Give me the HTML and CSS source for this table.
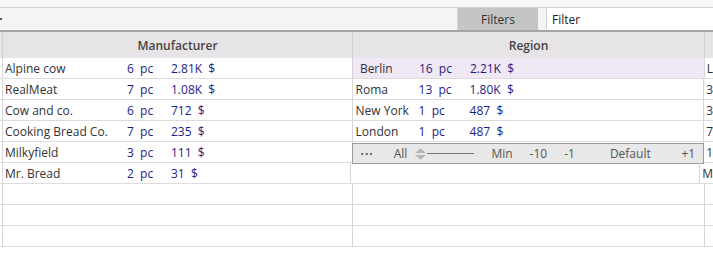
FILE: index.html
```html
<!DOCTYPE html>
<html>
<head>
<meta charset="utf-8">
<link rel="stylesheet" href="styles.css">
</head>
<body>
<div class="top-strip"></div>
<div class="toolbar">
  <span class="dot"></span>
  <div class="spacer"></div>
  <button class="filters-btn">Filters</button>
  <div class="filter-input">Filter</div>
</div>
<div class="grid">
  <div class="header">
    <div class="gutter"></div>
    <div class="hcell c1">Manufacturer</div>
    <div class="hcell c2">Region</div>
    <div class="hcell c3"></div>
  </div>
  <div class="row">
    <div class="gutter"></div>
    <div class="cell c1"><span class="name">Alpine cow</span><span class="qty">6&nbsp; pc</span><span class="sum">2.81K&nbsp; $</span></div>
    <div class="cell c2 hl"><span class="rname ind">Berlin</span><span class="rqty">16&nbsp; pc</span><span class="rsum">2.21K&nbsp; $</span></div>
    <div class="cell c3">L</div>
  </div>
  <div class="row">
    <div class="gutter"></div>
    <div class="cell c1"><span class="name">RealMeat</span><span class="qty">7&nbsp; pc</span><span class="sum">1.08K&nbsp; $</span></div>
    <div class="cell c2"><span class="rname">Roma</span><span class="rqty">13&nbsp; pc</span><span class="rsum">1.80K&nbsp; $</span></div>
    <div class="cell c3">3</div>
  </div>
  <div class="row">
    <div class="gutter"></div>
    <div class="cell c1"><span class="name">Cow and co.</span><span class="qty">6&nbsp; pc</span><span class="sum">712&nbsp; $</span></div>
    <div class="cell c2"><span class="rname">New York</span><span class="rqty">1&nbsp; pc</span><span class="rsum">487&nbsp; $</span></div>
    <div class="cell c3">3</div>
  </div>
  <div class="row">
    <div class="gutter"></div>
    <div class="cell c1"><span class="name">Cooking Bread Co.</span><span class="qty">7&nbsp; pc</span><span class="sum">235&nbsp; $</span></div>
    <div class="cell c2"><span class="rname">London</span><span class="rqty">1&nbsp; pc</span><span class="rsum">487&nbsp; $</span></div>
    <div class="cell c3">7</div>
  </div>
  <div class="row">
    <div class="gutter"></div>
    <div class="cell c1"><span class="name">Milkyfield</span><span class="qty">3&nbsp; pc</span><span class="sum">111&nbsp; $</span></div>
    <div class="cell c2 pager-cell">
      <div class="pager">
        <span class="p-dots">•••</span>
        <span class="p-all">All</span>
        <svg class="p-spin" width="13" height="12" viewBox="0 0 13 12"><path d="M1 5 L6.5 0.5 L12 5 Z M1 7 L6.5 11.5 L12 7 Z" fill="#b4b4b4"/></svg>
        <span class="p-line"></span>
        <span class="p-min">Min</span>
        <span class="p-m10">-10</span>
        <span class="p-m1">-1</span>
        <span class="p-def">Default</span>
        <span class="p-p1">+1</span>
      </div>
    </div>
    <div class="cell c3">1</div>
  </div>
  <div class="row">
    <div class="gutter"></div>
    <div class="cell c1"><span class="name">Mr. Bread</span><span class="qty">2&nbsp; pc</span><span class="sum">31&nbsp; $</span></div>
    <div class="cell c2"></div>
    <div class="cell c3">M</div>
  </div>
  <div class="row">
    <div class="gutter"></div>
    <div class="cell c1"></div>
    <div class="cell c2"></div>
    <div class="cell c3"></div>
  </div>
  <div class="row">
    <div class="gutter"></div>
    <div class="cell c1"></div>
    <div class="cell c2"></div>
    <div class="cell c3"></div>
  </div>
  <div class="row">
    <div class="gutter"></div>
    <div class="cell c1"></div>
    <div class="cell c2"></div>
    <div class="cell c3"></div>
  </div>
</div>
</body>
</html>
```
FILE: styles.css
```css
* { box-sizing: border-box; }
html, body { margin: 0; padding: 0; background: #fff; }
body {
  width: 713px;
  height: 258px;
  overflow: hidden;
  font-family: "Open Sans", "Noto Sans", sans-serif;
  font-size: 12px;
  color: #333;
}
.top-strip {
  height: 8px;
  background: #f8f8f8;
  border-bottom: 1px solid #d4d4d4;
}
.toolbar {
  display: flex;
  align-items: stretch;
  height: 24px;
  background: #f4f4f4;
  border-bottom: 2px solid #a6a6a6;
}
.dot {
  width: 2px; height: 2px;
  background: #555;
  margin-top: 10px;
}
.spacer { flex: 1; }
.filters-btn {
  width: 81px;
  margin: 0;
  padding: 0;
  border: none;
  border-left: 1px solid #d8d8d8;
  background: #c5c5c5;
  font-family: inherit;
  font-size: 12px;
  color: #333;
}
.filter-input {
  width: 167px;
  margin-left: 8px;
  background: #fff;
  border-left: 1px solid #d0d0d0;
  padding: 3px 0 0 5px;
  color: #222;
}
.header, .row { display: flex; }
.header { height: 26px; background: #e6e4e6; }
.row { height: 21px; }
.gutter { width: 3px; border-right: 1px solid #d6d6d6; }
.header .gutter { border-right-color: #d0d0d0; }
.c1 { width: 350px; }
.c2 { width: 352px; }
.c3 { flex: 1; }
.hcell {
  border-right: 1px solid #d0d0d0;
  text-align: center;
  font-weight: 600;
  color: #444;
  padding-top: 5px;
}
.hcell.c3 { border-right: none; }
.cell {
  border-right: 1px solid #d6d6d6;
  border-bottom: 1px solid #dcdcdc;
  display: flex;
  align-items: center;
  white-space: nowrap;
}
.cell.c3 { border-right: none; padding-left: 2px; color: #333; }
.row .gutter { border-bottom: 1px solid #dcdcdc; }
.name { width: 124px; padding-left: 2px; }
.qty { width: 44px; color: #1e1e85; }
.sum { color: #1e1e85; }
.rname { width: 66px; padding-left: 3px; }
.rname.ind { padding-left: 7px; }
.rqty { width: 51px; color: #1e1e85; }
.rsum { color: #1e1e85; }
.hl { background: #f1e8f6; }
.pager-cell { border-bottom: none; align-items: stretch; }
.pager {
  flex: 1;
  display: flex;
  align-items: center;
  margin: 1px -1px 0 -1px;
  background: #e8e8e8;
  border: 1px solid #9a9a9a;
  color: #555;
  height: 21px;
}
.p-dots { margin-left: 8px; font-size: 9px; letter-spacing: 1px; color: #555; }
.p-all { margin-left: 20px; }
.p-spin { margin-left: 7px; }
.p-line { width: 47px; height: 1px; background: #777; }
.p-min { margin-left: 17px; }
.p-m10 { margin-left: 17px; }
.p-m1 { margin-left: 17px; }
.p-def { margin-left: 35px; }
.p-p1 { margin-left: auto; margin-right: 8px; }
```
